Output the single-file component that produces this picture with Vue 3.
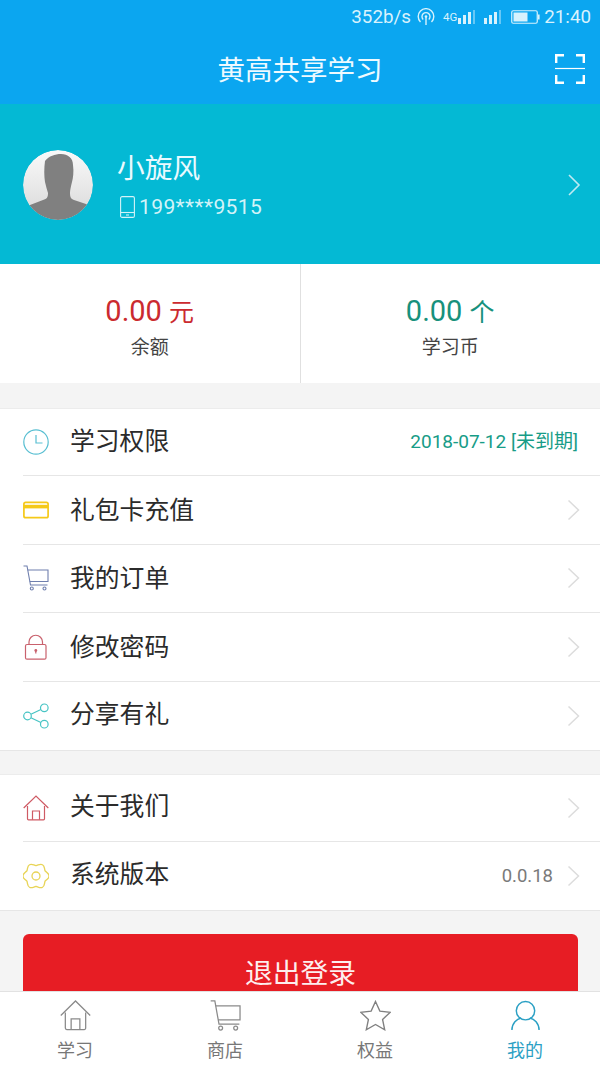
<script setup>
const groupOne = [
  { label: '学习权限', icon: 'clock', note: '2018-07-12 [未到期]', noArrow: true },
  { label: '礼包卡充值', icon: 'card' },
  { label: '我的订单', icon: 'cart' },
  { label: '修改密码', icon: 'lock' },
  { label: '分享有礼', icon: 'share' },
];
const groupTwo = [
  { label: '关于我们', icon: 'home' },
  { label: '系统版本', icon: 'gear', version: '0.0.18' },
];
const groups = [groupOne, groupTwo];

const tabs = [
  { label: '学习', icon: 'home' },
  { label: '商店', icon: 'cart' },
  { label: '权益', icon: 'star' },
  { label: '我的', icon: 'user', active: true },
];

// six lobes round the centre of the 26px box
const point = (deg, r) => {
  const rad = (deg * Math.PI) / 180;
  return `${(13 + r * Math.cos(rad)).toFixed(2)} ${(13 + r * Math.sin(rad)).toFixed(2)}`;
};
const gearPath = (() => {
  let d = `M${point(-30, 10.4)}`;
  for (let a = 0; a < 360; a += 60) {
    d += `C${point(a - 16, 11.5)} ${point(a - 10, 13.4)} ${point(a, 13)}`;
    d += `C${point(a + 10, 13.4)} ${point(a + 16, 11.5)} ${point(a + 30, 10.4)}`;
  }
  return d + 'Z';
})();
</script>

<template>
  <div class="page">
    <div class="top">
      <div class="status">
        <span>352b/s</span>
        <svg class="st-wifi" width="18" height="18" viewBox="0 0 18 18" fill="none" stroke="currentColor" stroke-width="1.4">
          <path d="M3.500 14a7.800 7.800 0 1 1 11 0" />
          <path d="M6.200 11.500a4 4 0 1 1 5.600 0" />
          <circle cx="9" cy="8.500" r="1.300" fill="currentColor" stroke="none" />
          <path d="M9 9v8" />
        </svg>
        <span class="st-4g">4G</span>
        <svg width="19" height="14" viewBox="0 0 19 14" fill="currentColor">
          <rect x="0" y="8" width="3" height="6" />
          <rect x="5" y="5" width="3" height="9" />
          <rect x="10" y="2" width="3" height="12" />
          <rect x="15" y="0" width="2" height="14" opacity=".45" />
        </svg>
        <svg class="st-sig" width="19" height="14" viewBox="0 0 19 14" fill="currentColor">
          <rect x="0" y="8" width="3" height="6" />
          <rect x="5" y="5" width="3" height="9" />
          <rect x="10" y="2" width="3" height="12" />
          <rect x="15" y="0" width="2" height="14" opacity=".45" />
        </svg>
        <svg class="st-bat" width="29" height="14" viewBox="0 0 29 14" fill="none">
          <rect x=".75" y=".75" width="25.500" height="12.500" rx="1.500" stroke="currentColor" stroke-width="1.200" />
          <rect x="2.500" y="2.500" width="14" height="9" fill="currentColor" />
          <rect x="27" y="4.500" width="1.600" height="5" fill="currentColor" />
        </svg>
        <span>21:40</span>
      </div>
      <div class="nav">
        <span class="nav-title">黄高共享学习</span>
        <svg class="scan" width="30" height="30" viewBox="0 0 30 30" fill="none" stroke="#fff" stroke-width="2.400">
          <path d="M1.200 9V1.200H9M21 1.200h7.800V9M1.200 21v7.800H9M21 28.800h7.800V21" />
          <path d="M0 14.500h30" stroke-width="1.200" />
        </svg>
      </div>
    </div>

    <div class="main">
      <div class="profile">
        <div class="avatar">
          <svg width="70" height="70" viewBox="0 0 70 70">
            <defs>
              <linearGradient id="avatarBg" x1="0" y1="0" x2="0" y2="1">
                <stop offset="0" stop-color="#fafafa" />
                <stop offset="1" stop-color="#d8d8d8" />
              </linearGradient>
              <clipPath id="avatarClip">
                <circle cx="35" cy="35" r="35" />
              </clipPath>
            </defs>
            <circle cx="35" cy="35" r="35" fill="url(#avatarBg)" />
            <path clip-path="url(#avatarClip)" d="M22 11C26 6 32 4 38 4C45 4 50 8 50 15C51 22 50 28 49 32C48 36 47 40 47 43C47 47 48 49 51 50L63 54L70 58V70H0V58L7 55L20 50C24 49 25 47 25 43C24 40 23 36 22 32C21 26 21 18 22 11Z" fill="#808080" />
          </svg>
        </div>
        <div class="who">
          <div class="name">小旋风</div>
          <div class="phone">
            <svg width="15" height="22" viewBox="0 0 15 22" fill="none" stroke="#d3f3f8" stroke-width="1.100">
              <rect x=".6" y=".6" width="13.800" height="20.800" rx="1.500" />
              <path d="M.6 16.500h13.800" />
              <path d="M6 19h3" />
            </svg>
            <span>199****9515</span>
          </div>
        </div>
        <svg class="chev-w" width="14" height="24" viewBox="0 0 14 24" fill="none" stroke="#bfeaf2" stroke-width="1.600">
          <path d="M2 2l10 10L2 22" />
        </svg>
      </div>

      <div class="stats">
        <div class="stat">
          <div class="amount red">0.00 <small>元</small></div>
          <div class="stat-label">余额</div>
        </div>
        <div class="stat">
          <div class="amount green">0.00 <small>个</small></div>
          <div class="stat-label">学习币</div>
        </div>
      </div>

      <div v-for="(group, g) in groups" :key="g" class="group">
        <div v-for="row in group" :key="row.label" class="row">
          <svg v-if="row.icon === 'clock'" class="ic" width="26" height="26" viewBox="0 0 26 26" fill="none" stroke="#59bfd2" stroke-width="1.200">
            <circle cx="13" cy="13" r="12.200" />
            <path d="M13 6v8h6.500" />
          </svg>
          <svg v-else-if="row.icon === 'card'" class="ic" width="26" height="26" viewBox="0 0 26 26" fill="none" stroke="#f5c919" stroke-width="1.700">
            <rect x=".9" y="5.300" width="24.200" height="15.400" rx="1.800" />
            <path d="M.9 9.600h24.200" stroke-width="3.600" />
          </svg>
          <svg v-else-if="row.icon === 'cart'" class="ic" width="26" height="26" viewBox="0 0 26 26" fill="none" stroke="#6f7fae" stroke-width="1.100">
            <path d="M.5 1h3.500l3.500 19h17" />
            <path d="M4.800 5h20.200v11.500H6.800" />
            <circle cx="8.800" cy="23.500" r="1.500" />
            <circle cx="21.500" cy="23.500" r="1.500" />
          </svg>
          <svg v-else-if="row.icon === 'lock'" class="ic" width="26" height="26" viewBox="0 0 26 26" fill="none" stroke="#c9616d" stroke-width="1.200">
            <rect x="2.500" y="10.500" width="20.500" height="14.700" rx="1.500" />
            <path d="M6 10.500V8a6.700 6.700 0 0 1 13.500 0v2.500" />
            <circle cx="12.800" cy="16.500" r="1.400" fill="#c9616d" stroke="none" />
            <path d="M12.800 16.500v3" />
          </svg>
          <svg v-else-if="row.icon === 'share'" class="ic" width="26" height="26" viewBox="0 0 26 26" fill="none" stroke="#47c4c4" stroke-width="1.200">
            <circle cx="4.500" cy="13" r="3.800" />
            <circle cx="21.300" cy="4.800" r="3.800" />
            <circle cx="21.300" cy="21.200" r="3.800" />
            <path d="M7.900 11.300l10-4.800M7.900 14.700l10 4.800" />
          </svg>
          <svg v-else-if="row.icon === 'home'" class="ic" width="26" height="26" viewBox="0 0 26 26" fill="none" stroke="#cf5a64" stroke-width="1.200">
            <path d="M.7 13L13 1l12.300 12" />
            <path d="M4.500 11v12.800a1 1 0 0 0 1 1h15a1 1 0 0 0 1-1V11" />
            <path d="M9.500 24.800V16h7v8.800" />
          </svg>
          <svg v-else class="ic" width="26" height="26" viewBox="0 0 26 26" fill="none" stroke="#e8d456" stroke-width="1.300">
            <path :d="gearPath" />
            <circle cx="13" cy="13" r="4" />
          </svg>
          <span class="row-label">{{ row.label }}</span>
          <span v-if="row.note" class="note">{{ row.note }}</span>
          <span v-if="row.version" class="version">{{ row.version }}</span>
          <svg v-if="!row.noArrow" class="chev" width="13" height="22" viewBox="0 0 13 22" fill="none" stroke="#dcdcdc" stroke-width="1.500">
            <path d="M1.500 1.500l10 9.500-10 9.500" />
          </svg>
        </div>
      </div>

      <div class="logout">退出登录</div>
    </div>

    <div class="tabs">
      <div v-for="tab in tabs" :key="tab.label" class="tab" :class="{ on: tab.active }">
        <svg v-if="tab.icon === 'home'" width="31" height="31" viewBox="0 0 32 32" fill="none" stroke="#8a8a8a" stroke-width="1.300">
          <path d="M.8 16L16 1l15.200 15" />
          <path d="M5.500 13v16a1.500 1.500 0 0 0 1.500 1.500h18a1.500 1.500 0 0 0 1.500-1.500V13" />
          <path d="M11.500 30.500V19.500h9v11" />
        </svg>
        <svg v-else-if="tab.icon === 'cart'" width="31" height="31" viewBox="0 0 32 32" fill="none" stroke="#8a8a8a" stroke-width="1.300">
          <path d="M.7 1h4.300l4.300 24h21" />
          <path d="M5.800 6H31v14.500H8.300" />
          <circle cx="11" cy="29" r="2" />
          <circle cx="26.500" cy="29" r="2" />
        </svg>
        <svg v-else-if="tab.icon === 'star'" width="31" height="31" viewBox="0 0 32 32" fill="none" stroke="#808080" stroke-width="1.400">
          <path d="M16 1.500l4.500 10 10.800 1.200-8 7.300 2.200 10.700-9.500-5.400-9.500 5.400L8.700 20l-8-7.300 10.800-1.200z" />
        </svg>
        <svg v-else width="31" height="31" viewBox="0 0 32 32" fill="none" stroke="#2ba0c4" stroke-width="1.500">
          <circle cx="16" cy="11" r="9.500" />
          <path d="M2 31c0-7 5-11.500 9.500-12.500M30 31c0-7-5-11.500-9.500-12.500" />
        </svg>
        <span class="tab-label">{{ tab.label }}</span>
      </div>
    </div>
  </div>
</template>

<style>
html,
body {
  margin: 0;
  overflow: hidden;
}
</style>

<style scoped>
.page {
  display: flex;
  flex-direction: column;
  width: 600px;
  height: 1067px;
  overflow: hidden;
  background: #f4f4f4;
  font-family: "Noto Sans CJK SC", Roboto, sans-serif;
  color: #333;
}
.top {
  flex: none;
  height: 104px;
  background: #0ba6f0;
  color: #fff;
}
.status {
  display: flex;
  align-items: center;
  justify-content: flex-end;
  height: 34px;
  padding-right: 9px;
  font-family: Roboto, sans-serif;
  font-size: 18.800px;
  color: #d8f2fd;
}
.st-wifi {
  margin-left: 6px;
}
.st-4g {
  margin-left: 8px;
  margin-right: 1px;
  font-size: 11.500px;
}
.st-sig {
  margin-left: 7px;
}
.st-bat {
  margin-left: 8px;
  margin-right: 4px;
}
.nav {
  position: relative;
  height: 70px;
  display: flex;
  align-items: center;
  justify-content: center;
}
.nav-title {
  font-size: 27.500px;
  margin-bottom: 3px;
  color: #eefaff;
}
.scan {
  position: absolute;
  right: 15px;
  top: 20px;
}
.main {
  flex: 1;
  min-height: 0;
  overflow: hidden;
}
.profile {
  display: flex;
  align-items: center;
  height: 160px;
  box-sizing: border-box;
  padding: 2px 0 0 23px;
  background: #04b9d4;
}
.avatar {
  width: 70px;
  height: 70px;
  border-radius: 50%;
  overflow: hidden;
}
.who {
  flex: 1;
  margin-left: 24px;
}
.name {
  margin-top: -2px;
  font-size: 27.700px;
  line-height: 36px;
  color: #eafaff;
}
.phone {
  display: flex;
  align-items: center;
  margin-top: 9px;
  font-family: Roboto, sans-serif;
  font-size: 21px;
  line-height: 28px;
  letter-spacing: .4px;
  color: #d3f3f8;
}
.phone svg {
  margin: 0 4px 0 3px;
}
.chev-w {
  margin-right: 19px;
}
.stats {
  display: flex;
  height: 119px;
  background: #fff;
}
.stat {
  flex: 1;
  text-align: center;
  padding-top: 27px;
}
.stat + .stat {
  border-left: 1px solid #e0e0e0;
}
.amount {
  font-family: Roboto, "Noto Sans CJK SC", sans-serif;
  font-size: 29px;
  line-height: 38px;
}
.amount small {
  font-family: "Noto Sans CJK SC", sans-serif;
  font-size: 25px;
}
.red {
  color: #cb2a2f;
}
.green {
  color: #17917c;
}
.stat-label {
  margin-top: 3px;
  font-size: 19px;
  line-height: 26px;
  color: #444;
}
.group {
  margin-top: 25px;
  background: #fff;
  border-top: 1px solid #ececec;
  border-bottom: 1px solid #e6e6e6;
}
.group + .group {
  margin-top: 23px;
}
.row {
  display: flex;
  align-items: center;
  height: 68.400px;
  margin-left: 23px;
  padding-right: 22px;
  box-sizing: border-box;
  border-bottom: 1px solid #e6e6e6;
}
.row:first-child {
  height: 67.400px;
}
.row:last-child {
  border-bottom: 0;
  height: 68px;
}
.ic {
  flex: none;
}
.row-label {
  flex: 1;
  margin-left: 21px;
  margin-bottom: 4px;
  font-size: 24.800px;
  color: #2b2b2b;
}
.row:first-child .row-label,
.row:last-child .row-label {
  margin-bottom: 7px;
}
.note {
  margin-bottom: 6px;
  font-family: Roboto, "Noto Sans CJK SC", sans-serif;
  font-size: 19px;
  color: #179c87;
}
.version {
  margin-right: 14px;
  font-family: Roboto, sans-serif;
  font-size: 18.500px;
  color: #7a7a7a;
}
.chev {
  flex: none;
  margin-right: -2px;
}
.logout {
  height: 80px;
  margin: 23px 22px 0 23px;
  padding-top: 17px;
  box-sizing: border-box;
  border-radius: 6px;
  background: #e71d24;
  color: #fdeeee;
  font-size: 27.800px;
  line-height: 40px;
  text-align: center;
}
.tabs {
  flex: none;
  display: flex;
  height: 76px;
  box-sizing: border-box;
  border-top: 1px solid #e2e2e2;
  background: #fff;
}
.tab {
  flex: 1;
  display: flex;
  flex-direction: column;
  align-items: center;
  padding-top: 8px;
  color: #777;
}
.tab.on {
  color: #2ba0c4;
}
.tab-label {
  margin-top: 6px;
  font-size: 18px;
  line-height: 24px;
}
</style>
